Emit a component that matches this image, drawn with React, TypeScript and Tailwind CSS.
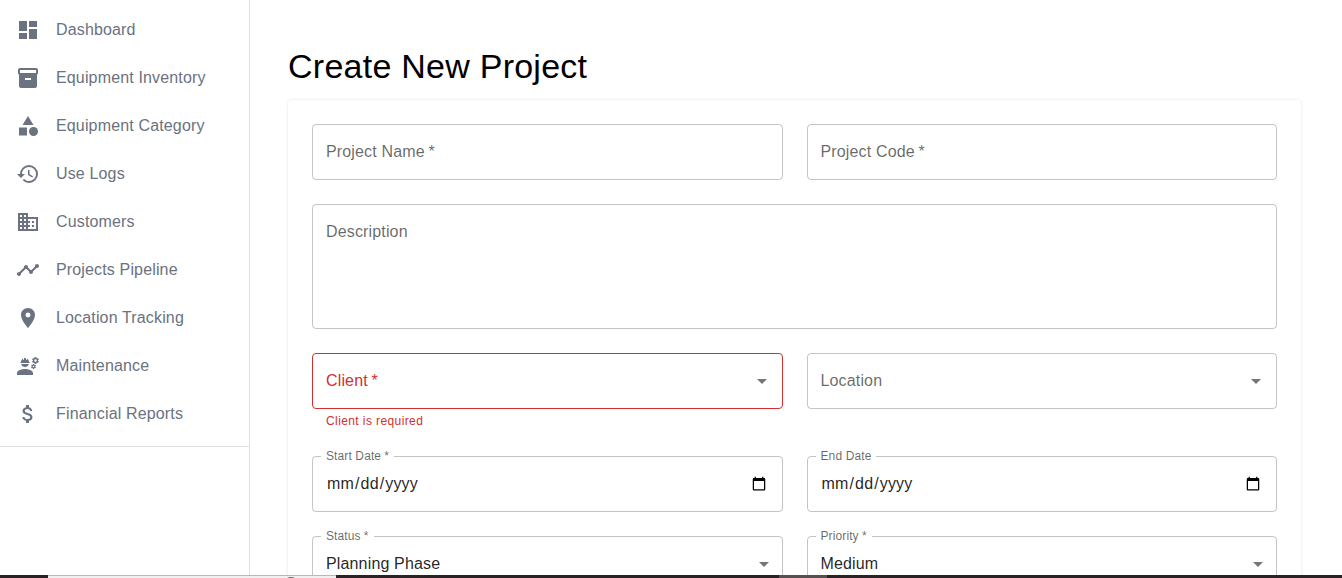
import React from 'react';
import type { ReactNode } from 'react';
import type { IconType } from 'react-icons';
import {
  MdArrowDropDown,
  MdAttachMoney,
  MdBusiness,
  MdCategory,
  MdDashboard,
  MdEngineering,
  MdHistory,
  MdInventory2,
  MdLocationOn,
  MdTimeline,
} from 'react-icons/md';

const navItems: { label: string; icon: IconType }[] = [
  { label: 'Dashboard', icon: MdDashboard },
  { label: 'Equipment Inventory', icon: MdInventory2 },
  { label: 'Equipment Category', icon: MdCategory },
  { label: 'Use Logs', icon: MdHistory },
  { label: 'Customers', icon: MdBusiness },
  { label: 'Projects Pipeline', icon: MdTimeline },
  { label: 'Location Tracking', icon: MdLocationOn },
  { label: 'Maintenance', icon: MdEngineering },
  { label: 'Financial Reports', icon: MdAttachMoney },
];

function Sidebar() {
  return (
    <aside className="w-[250px] shrink-0 border-r border-black/12">
      <nav className="border-b border-black/12 pt-[6px] pb-2">
        {navItems.map(({ label, icon: Icon }) => (
          <a key={label} className="flex h-12 items-center gap-4 px-4 text-[#6b7280]">
            <Icon className="size-6 shrink-0" />
            <span className="pb-px leading-6">{label}</span>
          </a>
        ))}
      </nav>
    </aside>
  );
}

function LabelText({ text, required }: { text: string; required?: boolean }) {
  return (
    <>
      {text}
      {required && <span className="-ml-[0.06em] whitespace-pre"> *</span>}
    </>
  );
}

type FieldProps = { label: string; required?: boolean };

/** Outlined box whose small label sits in a gap of the top border. */
function Outlined({ label, required, children }: FieldProps & { children: ReactNode }) {
  return (
    <div className="relative flex h-14 items-center rounded border border-black/23 px-[13px]">
      <span className="absolute -top-[9px] left-2 bg-white px-[5px] text-xs leading-4 tracking-[0.1126px] text-black/60">
        {required ? (
          <>
            {label}
            <span className="-ml-[0.3px] whitespace-pre"> *</span>
          </>
        ) : (
          label
        )}
      </span>
      {children}
    </div>
  );
}

function TextBox({ label, required }: FieldProps) {
  return (
    <div className="flex h-14 items-center rounded border border-black/23 px-[13px] text-black/60">
      <span className="pb-px">
        <LabelText text={label} required={required} />
      </span>
    </div>
  );
}

function ComboBox({ label, required, error }: FieldProps & { error?: string }) {
  return (
    <div>
      <div
        className={
          error
            ? 'flex h-14 items-center justify-between rounded border border-[#d32f2f] pr-2 pl-[13px] text-[#d32f2f]'
            : 'flex h-14 items-center justify-between rounded border border-black/23 pr-2 pl-[13px] text-black/60'
        }
      >
        <span className="pb-px">
          <LabelText text={label} required={required} />
        </span>
        <MdArrowDropDown className="size-6 text-black/54" />
      </div>
      {error && (
        <p className="mx-[14px] mt-[2px] mb-px text-xs leading-5 tracking-[0.4px] text-[#d32f2f]">{error}</p>
      )}
    </div>
  );
}

function DateBox({ label, required }: FieldProps) {
  return (
    <Outlined label={label} required={required}>
      <input type="date" aria-label={label} className="h-[23px] w-full text-black/87 outline-none" />
    </Outlined>
  );
}

function SelectBox({ label, required, value }: FieldProps & { value: string }) {
  return (
    <Outlined label={label} required={required}>
      <span className="grow pb-px text-black/87">{value}</span>
      <MdArrowDropDown className="-mr-[7px] size-6 text-black/54" />
    </Outlined>
  );
}

export default function App() {
  return (
    <div className="relative flex h-[578px] w-[1342px] overflow-hidden bg-white font-['Liberation_Sans',Arial,sans-serif] text-base tracking-[0.15px]">
      <Sidebar />
      <main className="grow pt-[45px] pr-[41px] pl-[38px]">
        <h1 className="mb-[13px] text-[34px] leading-[42px] tracking-[0.25px] text-black">Create New Project</h1>
        <form className="grid h-[700px] grid-cols-2 content-start gap-6 rounded p-6 shadow-[0_0_3px_0_rgba(0,0,0,0.12)]">
          <TextBox label="Project Name" required />
          <TextBox label="Project Code" required />
          <div className="col-span-2 h-[125px] rounded border border-black/23 px-[13px] pt-[15px] leading-[23px] text-black/60">
            Description
          </div>
          <ComboBox label="Client" required error="Client is required" />
          <ComboBox label="Location" />
          <DateBox label="Start Date" required />
          <DateBox label="End Date" />
          <SelectBox label="Status" required value="Planning Phase" />
          <SelectBox label="Priority" required value="Medium" />
        </form>
      </main>
      <div className="absolute inset-x-0 bottom-0 flex h-[3px] bg-[#2b2225]">
        <div className="ml-12 flex w-72 justify-end overflow-hidden border-t border-[#b8b8b8] bg-[#f0f0f0] pr-[37px]">
          <div className="mt-[0.5px] size-4 rounded-full bg-[#666]" />
        </div>
        <div className="ml-[443px] w-12 bg-[#565051]" />
      </div>
    </div>
  );
}
